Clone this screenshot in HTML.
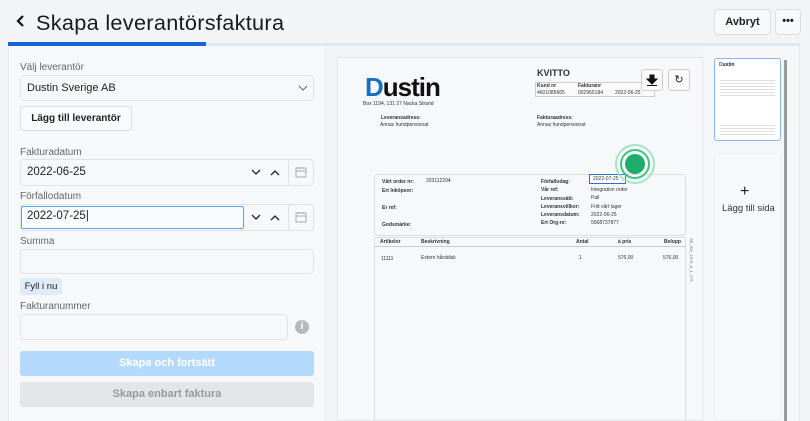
<!DOCTYPE html>
<html><head><meta charset="utf-8"><style>
*{box-sizing:border-box;margin:0;padding:0}
body{width:810px;height:421px;overflow:hidden;background:#f3f4f6;font-family:"Liberation Sans",Arial,sans-serif;color:#222;position:relative}
.abs{position:absolute}
.lbl{font-size:10px;color:#666}
.inp{position:absolute;background:#f7f8fa;border:1px solid #e0e2e6;border-radius:4px}
.doc{font-family:"Liberation Sans",Arial,sans-serif;color:#333}
.b{font-weight:bold}
.s{font-size:5px}
</style></head><body>
<!-- header -->
<svg class="abs" style="left:16px;top:14px" width="10" height="14"><path d="M7 2L2 7l5 5" stroke="#111" stroke-width="2.2" fill="none"/></svg>
<div class="abs" style="left:36px;top:10px;font-size:21.7px;color:#1a1a1a;letter-spacing:0.3px">Skapa leverantörsfaktura</div>
<div class="abs" style="left:714px;top:9px;width:57px;height:26px;border:1px solid #ddd;border-radius:4px;background:#f8f9fa;font-size:11px;font-weight:bold;text-align:center;line-height:24px">Avbryt</div>
<div class="abs" style="left:775px;top:9px;width:26px;height:26px;border:1px solid #ddd;border-radius:4px;background:#f8f9fa;font-size:11px;font-weight:bold;text-align:center;line-height:22px">•••</div>
<div class="abs" style="left:8px;top:43px;width:792px;height:3px;background:#dbe8f8"></div>
<div class="abs" style="left:8px;top:42px;width:198px;height:4px;background:#1a63d6"></div>
<!-- left panel -->
<div class="abs" style="left:8px;top:46px;width:318px;height:375px;background:#f7f8fa;border-left:1px solid #e8e9ec;border-right:1px solid #e8e9ec"></div>
<div class="abs lbl" style="left:20px;top:62px">Välj leverantör</div>
<div class="inp" style="left:20px;top:75px;width:294px;height:26px"></div>
<div class="abs" style="left:27px;top:82px;font-size:11px">Dustin Sverige AB</div>
<svg class="abs" style="left:298px;top:84px" width="10" height="8"><path d="M1 2l4 4 4-4" stroke="#666" fill="none"/></svg>
<div class="abs" style="left:20px;top:106px;width:112px;height:25px;border:1px solid #ddd;border-radius:4px;background:#f9fafb;font-size:10px;font-weight:bold;text-align:center;line-height:23px">Lägg till leverantör</div>
<div class="abs lbl" style="left:20px;top:147px">Fakturadatum</div>
<div class="inp" style="left:20px;top:159px;width:294px;height:27px"></div>
<div class="abs" style="left:288px;top:160px;width:1px;height:25px;background:#e0e2e6"></div>
<div class="abs" style="left:27px;top:166px;font-size:11.5px">2022-06-25</div>
<svg class="abs" style="left:251px;top:169px" width="32" height="8"><path d="M1 1l4 4 4-4M20 6l4-4 4 4" stroke="#222" stroke-width="1.3" fill="none"/></svg>
<svg class="abs" style="left:295px;top:166px" width="12" height="12"><rect x="1" y="2" width="10" height="9" fill="none" stroke="#aaa"/><path d="M1 5h10M4 1v2M8 1v2" stroke="#aaa"/></svg>
<div class="abs lbl" style="left:20px;top:191px">Förfallodatum</div>
<div class="inp" style="left:20px;top:204px;width:294px;height:27px"></div>
<div class="abs" style="left:21px;top:206px;width:223px;height:23px;border:1px solid #5aa4f0;border-radius:2px;background:#fafbfc"></div>
<div class="abs" style="left:288px;top:205px;width:1px;height:25px;background:#e0e2e6"></div>
<div class="abs" style="left:27px;top:210px;font-size:11.5px">2022-07-25|</div>
<svg class="abs" style="left:251px;top:214px" width="32" height="8"><path d="M1 1l4 4 4-4M20 6l4-4 4 4" stroke="#222" stroke-width="1.3" fill="none"/></svg>
<svg class="abs" style="left:295px;top:211px" width="12" height="12"><rect x="1" y="2" width="10" height="9" fill="none" stroke="#aaa"/><path d="M1 5h10M4 1v2M8 1v2" stroke="#aaa"/></svg>
<div class="abs lbl" style="left:20px;top:236px">Summa</div>
<div class="inp" style="left:20px;top:249px;width:294px;height:25px"></div>
<div class="abs" style="left:20px;top:278px;width:42px;height:17px;background:#dfeafa;border-radius:3px;font-size:9.5px;text-align:center;line-height:17px">Fyll i nu</div>
<div class="abs lbl" style="left:20px;top:301px">Fakturanummer</div>
<div class="inp" style="left:20px;top:314px;width:268px;height:26px"></div>
<div class="abs" style="left:295px;top:320px;width:14px;height:14px;border-radius:50%;background:#b5b8bd;color:#fff;font-size:10px;font-weight:bold;text-align:center;line-height:14px">i</div>
<div class="abs" style="left:20px;top:351px;width:294px;height:25px;background:#b3dafc;border-radius:3px;color:#fff;font-size:11px;font-weight:bold;text-align:center;line-height:25px">Skapa och fortsätt</div>
<div class="abs" style="left:20px;top:382px;width:294px;height:25px;background:#e4e5e7;border-radius:3px;color:#999;font-size:11px;font-weight:bold;text-align:center;line-height:25px">Skapa enbart faktura</div>
<!-- document -->
<div class="abs" style="left:337px;top:57px;width:366px;height:364px;background:#f7f8fa;border:1px solid #e3e5e8"></div>
<div class="abs doc" style="left:365px;top:72px;font-size:26px;font-weight:bold;color:#111;letter-spacing:-1px"><span style="color:#1a6ec0">D</span>ustin</div>
<div class="abs doc" style="left:363px;top:101px;font-size:5px">Box 1194, 131 27 Nacka Strand</div>
<div class="abs doc b" style="left:537px;top:68px;font-size:9px">KVITTO</div>
<div class="abs" style="left:535px;top:82px;width:120px;height:15px;border:1px solid #ccc;background:#fafafa"></div>
<div class="abs doc s b" style="left:537px;top:83px">Kund nr</div><div class="abs doc s" style="left:537px;top:90px">4601085665</div>
<div class="abs doc s b" style="left:578px;top:83px">Fakturanr</div><div class="abs doc s" style="left:578px;top:90px">002965184</div>
<div class="abs doc s" style="left:615px;top:90px">2022-06-25</div>
<div class="abs" style="left:641px;top:69px;width:22px;height:22px;border:1px solid #ccc;border-radius:3px;background:#fafafa"></div>
<svg class="abs" style="left:645px;top:73px" width="14" height="14"><path d="M5 2h4v4h3l-5 5-5-5h3z M2 12.5h10" fill="#111" stroke="#111" stroke-width="1"/></svg>
<div class="abs" style="left:668px;top:69px;width:22px;height:22px;border:1px solid #ccc;border-radius:3px;background:#fafafa;font-size:11px;text-align:center;line-height:20px">&#8635;</div>
<div class="abs doc s b" style="left:381px;top:115px">Leveransadress:</div><div class="abs doc s" style="left:380px;top:122px">Annas hundpensionat</div>
<div class="abs doc s b" style="left:537px;top:115px">Fakturaadress:</div><div class="abs doc s" style="left:537px;top:122px">Annas hundpensionat</div>
<div class="abs" style="left:374px;top:174px;width:312px;height:62px;border:1px solid #ddd;border-radius:4px"></div>
<div class="abs doc s b" style="left:382px;top:178px;line-height:8.5px">Vårt order nr:<br>Ert Inköpsnr:<br><br>Er ref:<br><br>Godsmärke:</div>
<div class="abs doc s" style="left:426px;top:178px">203112294</div>
<div class="abs doc s b" style="left:541px;top:178px;line-height:8.3px">Förfallodag:<br>Vår ref:<br>Leveranssätt:<br>Leveransvillkor:<br>Leveransdatum:<br>Ert Org-nr:</div>
<div class="abs doc s" style="left:591px;top:186px;line-height:8.3px">Integration order<br>Pall<br>Fritt vårt lager<br>2022-06-25<br>5568737877</div>
<div class="abs" style="left:589px;top:174px;width:37px;height:10px;border:1.5px solid #2c6fd6;background:#fff"></div>
<div class="abs doc s" style="left:593px;top:176px">2022-07-25</div>
<div class="abs" style="left:615px;top:144px;width:40px;height:40px;border-radius:50%;border:2px solid #a8e3c6"></div>
<div class="abs" style="left:620px;top:149px;width:30px;height:30px;border-radius:50%;border:2px solid #3cc486"></div>
<div class="abs" style="left:625px;top:154px;width:20px;height:20px;border-radius:50%;background:#1fad6b"></div>
<div class="abs" style="left:374px;top:237px;width:312px;height:184px;border:1px solid #ddd;border-bottom:none"></div>
<div class="abs" style="left:374px;top:246px;width:312px;height:1px;background:#ccc"></div>
<div class="abs doc s b" style="left:380px;top:239px">Artikelnr</div>
<div class="abs doc s b" style="left:421px;top:239px">Beskrivning</div>
<div class="abs doc s b" style="left:576px;top:239px">Antal</div>
<div class="abs doc s b" style="left:618px;top:239px">à pris</div>
<div class="abs doc s b" style="left:664px;top:239px">Belopp</div>
<div class="abs doc s" style="left:381px;top:256px">11111</div>
<div class="abs doc s" style="left:421px;top:255px">Extern hårddisk</div>
<div class="abs doc s" style="left:579px;top:255px">1</div>
<div class="abs doc s" style="left:618px;top:255px">576,00</div>
<div class="abs doc s" style="left:663px;top:255px">576,00</div>
<div class="abs doc" style="left:689px;top:238px;font-size:4px;writing-mode:vertical-rl;color:#666">SE_INV_1076_A_1_375</div>
<!-- thumbnails -->
<div class="abs" style="left:703px;top:46px;width:97px;height:375px;background:#f5f6f8;border-right:1px solid #e3e5e8"></div>
<div class="abs" style="left:714px;top:58px;width:67px;height:83px;border:1.5px solid #8bb4f0;border-radius:3px;background:#fff"></div>
<div class="abs" style="left:719px;top:62px;font-size:5px;font-weight:bold;color:#222"><span style="color:#1a6ec0">D</span>ustin</div>
<div class="abs" style="left:720px;top:78px;width:55px;height:20px;background:repeating-linear-gradient(#fff 0 2px,#ccc 2px 3px);opacity:.6"></div>
<div class="abs" style="left:720px;top:123px;width:55px;height:12px;background:repeating-linear-gradient(#fff 0 2px,#ccc 2px 3px);opacity:.6"></div>
<div class="abs" style="left:784px;top:60px;width:3px;height:361px;background:#999"></div>
<div class="abs" style="left:714px;top:153px;width:67px;height:268px;border:1px solid #eceef0;border-radius:3px;background:#f7f8fa"></div>
<div class="abs" style="left:740px;top:183px;font-size:16px">+</div>
<div class="abs" style="left:722px;top:203px;font-size:9.5px;color:#333">Lägg till sida</div>
</body></html>
